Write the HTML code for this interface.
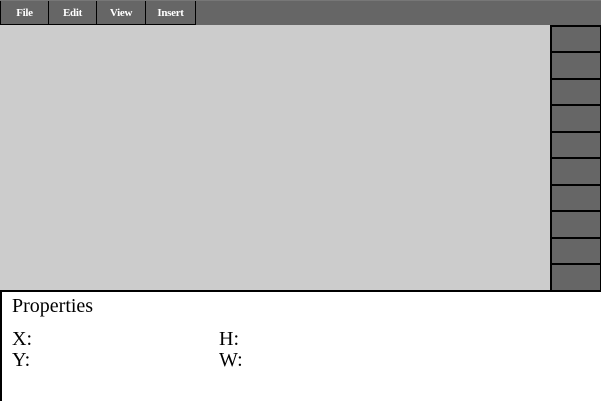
<!DOCTYPE html>
<html><head><style>
html,body{margin:0;padding:0;width:601px;height:401px;overflow:hidden;background:#fff;font-family:"Liberation Serif",serif;}
#top{position:absolute;left:0;top:0;width:601px;height:25px;background:#666;border-top:1px solid #777;box-sizing:border-box;}
.m{position:absolute;top:0;height:24px;border:1px solid #000;border-top:none;box-sizing:border-box;background:#666;color:#fff;font-weight:bold;font-size:11px;letter-spacing:-0.3px;text-align:center;line-height:24px;}
#canvas{position:absolute;left:0;top:25px;width:550px;height:266px;background:#ccc;}
#side{position:absolute;left:550px;top:25px;width:51px;height:267px;}
.b{position:absolute;left:0;width:51px;background:#666;border:2px solid #000;border-right:1px solid #000;box-sizing:border-box;}
#props{position:absolute;left:0;top:290px;width:601px;height:111px;border-left:2px solid #000;border-top:2px solid #000;box-sizing:border-box;color:#000;}
.t{position:absolute;font-size:20px;line-height:20px;}
</style></head><body>
<div id="top">
<div class="m" style="left:0;width:49px">File</div>
<div class="m" style="left:48px;width:49px">Edit</div>
<div class="m" style="left:96px;width:50px">View</div>
<div class="m" style="left:145px;width:51px">Insert</div>
</div>
<div id="canvas"></div>
<div id="side">
<div class="b" style="top:0;height:28px"></div>
<div class="b" style="top:26px;height:29px"></div>
<div class="b" style="top:53px;height:28px"></div>
<div class="b" style="top:79px;height:29px"></div>
<div class="b" style="top:106px;height:28px"></div>
<div class="b" style="top:132px;height:29px"></div>
<div class="b" style="top:159px;height:28px"></div>
<div class="b" style="top:185px;height:29px"></div>
<div class="b" style="top:212px;height:28px"></div>
<div class="b" style="top:238px;height:29px"></div>
</div>
<div id="props">
<div class="t" style="left:10px;top:4px">Properties</div>
<div class="t" style="left:10px;top:37px">X:</div>
<div class="t" style="left:10px;top:58px">Y:</div>
<div class="t" style="left:217px;top:37px">H:</div>
<div class="t" style="left:217px;top:58px">W:</div>
</div>
</body></html>
